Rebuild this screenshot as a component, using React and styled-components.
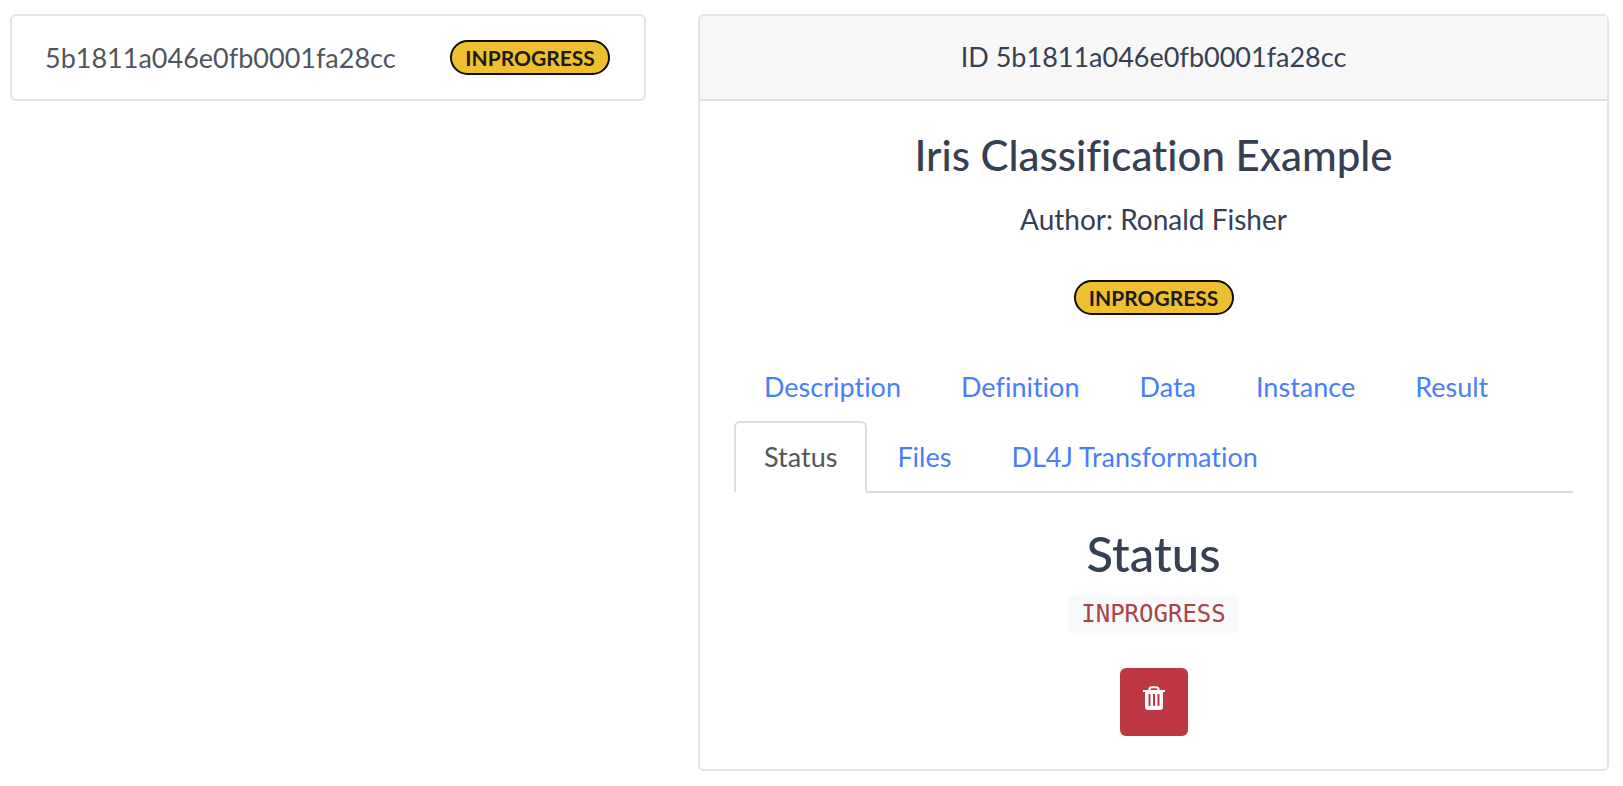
import React, { useState } from 'react';
import styled, { createGlobalStyle } from 'styled-components';

const GlobalStyle = createGlobalStyle`
  *, *::before, *::after { box-sizing: border-box; }
  body {
    margin: 0;
    background: #fff;
    color: #354052;
    font-family: Lato, "Liberation Sans", sans-serif;
    font-size: 27px;
    font-variant-ligatures: none;
    line-height: 42px;
  }
`;

const Page = styled.main`
  display: grid;
  grid-template-columns: 636fr 911fr;
  column-gap: 52px;
  align-items: start;
  padding: 14px 14px 14px 10px;
`;

const Card = styled.section`
  border: 2px solid #e4e4e4;
  border-radius: 6px;
  background: #fff;
  overflow: hidden;
`;

const RunLink = styled.a`
  display: flex;
  align-items: center;
  justify-content: space-between;
  height: 83px;
  padding: 0 34px 0 33px;
  color: #50565d;
  text-decoration: none;
`;

const Badge = styled.span`
  display: inline-flex;
  align-items: center;
  justify-content: center;
  width: 160px;
  height: 35px;
  border: 2px solid #0d0d0d;
  border-radius: 18px;
  background: #eec02f;
  color: #1b1b14;
  font-size: 21px;
  font-weight: 700;
  line-height: 28px;
`;

const CardHeader = styled.header`
  height: 85px;
  padding: 20px 35px;
  border-bottom: 2px solid #dedede;
  background: #f7f7f7;
  text-align: center;
`;

const CardBody = styled.div`
  display: flex;
  flex-direction: column;
  align-items: center;
  padding: 29px 34px 33px;
`;

const Title = styled.h1`
  margin: 0;
  font-size: 42px;
  font-weight: 500;
  line-height: 50px;
`;

const Author = styled.p`
  margin: 18px 0 40px;
  font-size: 28px;
`;

const Tabs = styled.nav`
  display: flex;
  flex-wrap: wrap;
  align-self: stretch;
  margin-top: 36px;
  border-bottom: 2px solid #dbdcdd;
`;

const Tab = styled.a`
  height: 72px;
  margin-bottom: -2px;
  padding: 13px 28px;
  border: 2px solid transparent;
  border-radius: 6px 6px 0 0;
  color: #4a7dfc;
  text-decoration: none;

  &[aria-current] {
    border-color: #dbdcdd #dbdcdd #fff;
    background: #fff;
    color: #50565d;
  }
`;

const StatusTitle = styled.h2`
  margin: 31px 0 13px;
  font-size: 49px;
  font-weight: 500;
  line-height: 58px;
`;

const StatusCode = styled.code`
  padding: 2px 13px;
  border-radius: 6px;
  background: #f8f9fb;
  color: #a94347;
  font-family: "DejaVu Sans Mono", monospace;
  font-size: 24px;
  line-height: 34px;
`;

const DeleteButton = styled.button`
  display: flex;
  justify-content: center;
  width: 68px;
  height: 68px;
  margin-top: 35px;
  padding: 18px 0 0;
  border: 0;
  border-radius: 6px;
  background: #bd3844;
  color: #fff;
  cursor: pointer;
`;

const TrashIcon = () => (
  <svg width="22" height="24" viewBox="0 0 22 24" fill="none" aria-hidden="true">
    <path d="M6.5 5V3.5Q6.5 1.2 8.8 1.2H13.2Q15.5 1.2 15.5 3.5V5" stroke="currentColor" strokeWidth="2" />
    <path
      fill="currentColor"
      fillRule="evenodd"
      d="M0 4H22V6H20V21Q20 24 17 24H5Q2 24 2 21V6H0ZM5.5 8V20H7.5V8ZM10 8V20H12V8ZM14.5 8V20H16.5V8Z"
    />
  </svg>
);

const runId = '5b1811a046e0fb0001fa28cc';
const tabs = ['Description', 'Definition', 'Data', 'Instance', 'Result', 'Status', 'Files', 'DL4J Transformation'];

export default function App() {
  const [active, setActive] = useState('Status');

  return (
    <>
      <GlobalStyle />
      <Page>
        <Card>
          <RunLink href="#run">
            <span>{runId}</span>
            <Badge>INPROGRESS</Badge>
          </RunLink>
        </Card>
        <Card>
          <CardHeader>ID {runId}</CardHeader>
          <CardBody>
            <Title>Iris Classification Example</Title>
            <Author>Author: Ronald Fisher</Author>
            <Badge>INPROGRESS</Badge>
            <Tabs>
              {tabs.map((name) => (
                <Tab
                  key={name}
                  href={`#${name.toLowerCase().replace(' ', '-')}`}
                  aria-current={active === name ? 'page' : undefined}
                  onClick={() => setActive(name)}
                >
                  {name}
                </Tab>
              ))}
            </Tabs>
            <StatusTitle>{active}</StatusTitle>
            <StatusCode>INPROGRESS</StatusCode>
            <DeleteButton type="button" aria-label="Delete">
              <TrashIcon />
            </DeleteButton>
          </CardBody>
        </Card>
      </Page>
    </>
  );
}
